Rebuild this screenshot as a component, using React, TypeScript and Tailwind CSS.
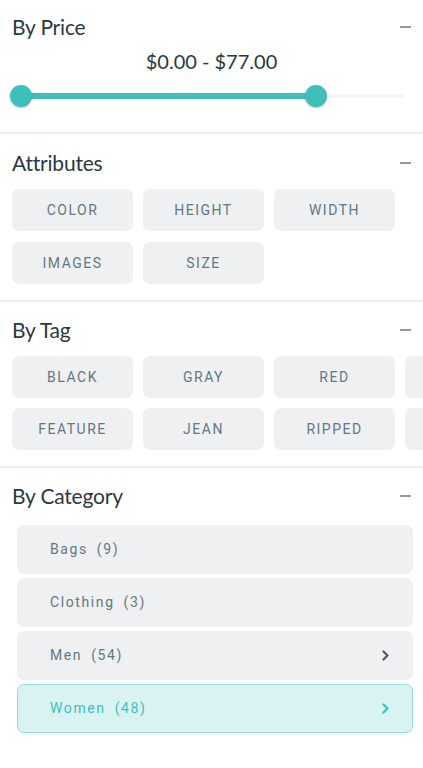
import React from "react";

const attributes = ["Color", "Height", "Width", "Images", "Size"];
// the fourth chip of each tag row runs off the right edge of the panel
const tagRows = [
  ["Black", "Gray", "Red", ""],
  ["Feature", "Jean", "Ripped", ""],
];
const categories = [
  { name: "Bags", count: 9 },
  { name: "Clothing", count: 3 },
  { name: "Men", count: 54, children: true },
  { name: "Women", count: 48, children: true, active: true },
];

function SectionHeader({ title }: { title: string }) {
  return (
    <div className="flex h-[28px] items-center justify-between pr-[12px] pl-[12px]">
      <h3 className="font-['Lato',sans-serif] text-[21px] leading-[28px] text-[#2b3940] tracking-[-0.2px]">
        {title}
      </h3>
      <span className="block h-[2px] w-[11px] bg-[#8e9ca7]" />
    </div>
  );
}

function Chip({ label }: { label: string }) {
  return (
    <button className="flex h-[42px] w-[121px] shrink-0 items-center justify-center rounded-[7px] bg-[#eff0f2] font-['Roboto',sans-serif] text-[14px] font-normal uppercase tracking-[1.5px] text-[#647783]">
      {label}
    </button>
  );
}

function Chevron({ color }: { color: string }) {
  return (
    <svg width="8" height="11" viewBox="0 0 8 11" fill="none">
      <path
        d="M1.5 1.5 L5.5 5.5 L1.5 9.5"
        stroke={color}
        strokeWidth="2.2"
        strokeLinecap="round"
        strokeLinejoin="round"
      />
    </svg>
  );
}

export default function App() {
  return (
    <div className="min-h-[768px] w-[423px] overflow-hidden bg-white">
      {/* price */}
      <section className="pt-[13px] pb-[25px]">
        <SectionHeader title="By Price" />
        <p className="mt-[6px] text-center font-['Lato',sans-serif] text-[20px] leading-[28px] text-[#2b3940]">
          $0.00 - $77.00
        </p>
        <div className="relative mt-[10px] ml-[10px] h-[22px] w-[394px]">
          <div className="absolute top-[9px] right-0 left-[11px] h-[4px] rounded-full bg-[#f4f4f4]" />
          <div className="absolute top-[8px] left-[11px] h-[6px] w-[295px] bg-[#3fbfbb]" />
          <span className="absolute top-0 left-0 h-[22px] w-[22px] rounded-full bg-[#3fbfbb] shadow-[0_1px_2px_rgba(0,0,0,0.25)]" />
          <span className="absolute top-0 left-[295px] h-[22px] w-[22px] rounded-full bg-[#3fbfbb] shadow-[0_1px_2px_rgba(0,0,0,0.25)]" />
        </div>
      </section>

      {/* attributes */}
      <section className="border-t-2 border-[#f0f0f0] pt-[15px] pb-[16px]">
        <SectionHeader title="Attributes" />
        <div className="mt-[12px] flex flex-wrap gap-x-[10px] gap-y-[11px] pl-[12px]">
          {attributes.map((a) => (
            <Chip key={a} label={a} />
          ))}
        </div>
      </section>

      {/* tags */}
      <section className="border-t-2 border-[#f0f0f0] pt-[14px] pb-[16px]">
        <SectionHeader title="By Tag" />
        <div className="mt-[12px] flex flex-col gap-[10px] overflow-hidden pl-[12px]">
          {tagRows.map((row, i) => (
            <div key={i} className="flex gap-[10px]">
              {row.map((t, j) => (
                <Chip key={j} label={t} />
              ))}
            </div>
          ))}
        </div>
      </section>

      {/* categories */}
      <section className="border-t-2 border-[#f0f0f0] pt-[14px] pb-[30px]">
        <SectionHeader title="By Category" />
        <ul className="mt-[15px] flex flex-col gap-[4px] pr-[10px] pl-[17px]">
          {categories.map((c) => (
            <li
              key={c.name}
              className={
                c.active
                  ? "flex h-[49px] items-center justify-between rounded-[7px] border border-[#92ddd9] bg-[#d8f3f2] pr-[22px] pl-[32px] font-['Roboto',sans-serif] text-[14px] font-normal tracking-[1.6px] text-[#3fbfbb]"
                  : "flex h-[49px] items-center justify-between rounded-[7px] border border-[#eff0f2] bg-[#eff0f2] pr-[22px] pl-[32px] font-['Roboto',sans-serif] text-[14px] font-normal tracking-[1.6px] text-[#647783]"
              }
            >
              <span>
                {c.name}
                <span className="ml-[9px]">({c.count})</span>
              </span>
              {c.children && <Chevron color={c.active ? "#3fbfbb" : "#4b5a63"} />}
            </li>
          ))}
        </ul>
      </section>
    </div>
  );
}
